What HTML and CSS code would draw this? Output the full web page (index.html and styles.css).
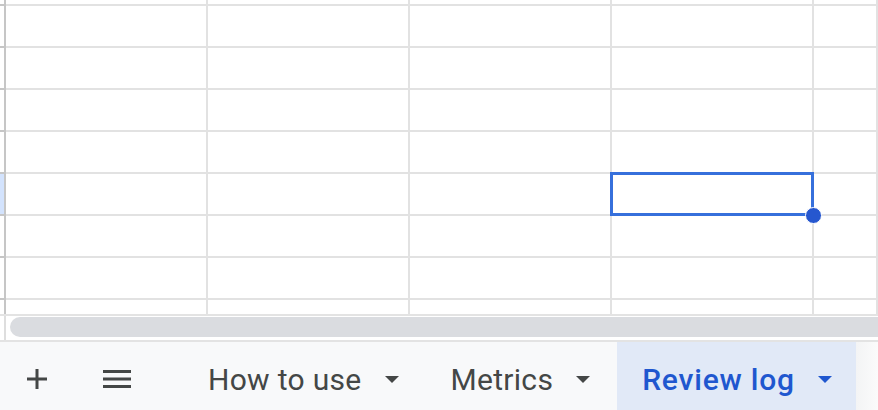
FILE: index.html
```html
<!doctype html>
<html>
    <head>
        <meta charset="utf-8">
        <link rel="stylesheet" href="styles.css">
    </head>
    <body>
        <div id="sheet">
            <div class="grid">
                <div class="rh"></div><div class="c"></div><div class="c"></div><div class="c"></div><div class="c"></div><div class="c"></div>
                <div class="rh"></div><div class="c"></div><div class="c"></div><div class="c"></div><div class="c"></div><div class="c"></div>
                <div class="rh"></div><div class="c"></div><div class="c"></div><div class="c"></div><div class="c"></div><div class="c"></div>
                <div class="rh"></div><div class="c"></div><div class="c"></div><div class="c"></div><div class="c"></div><div class="c"></div>
                <div class="rh"></div><div class="c"></div><div class="c"></div><div class="c"></div><div class="c"></div><div class="c"></div>
                <div class="rh active"></div><div class="c"></div><div class="c"></div><div class="c"></div><div class="c"></div><div class="c"></div>
                <div class="rh"></div><div class="c"></div><div class="c"></div><div class="c"></div><div class="c"></div><div class="c"></div>
                <div class="rh"></div><div class="c"></div><div class="c"></div><div class="c"></div><div class="c"></div><div class="c"></div>
                <div class="rh"></div><div class="c"></div><div class="c"></div><div class="c"></div><div class="c"></div><div class="c"></div>
            </div>
            <!-- selected cell -->
            <div class="selection"><span class="handle"></span></div>
        </div>

        <div id="hscroll">
            <div class="corner"></div>
            <div class="thumb"></div>
        </div>

        <div id="tabbar">
            <button class="tool add" title="Add sheet">
                <svg width="20" height="20" viewBox="0 0 20 20"><path d="M10 0v20M0 10h20" stroke="#444746" stroke-width="3"/></svg>
            </button>
            <button class="tool all" title="All sheets">
                <svg width="28" height="18" viewBox="0 0 28 18"><path d="M0 1.5h28M0 9h28M0 16.5h28" stroke="#444746" stroke-width="3"/></svg>
            </button>
            <div class="tabs">
                <div class="tab">How to use <span class="caret"></span></div>
                <div class="tab">Metrics <span class="caret"></span></div>
                <div class="tab current">Review log <span class="caret"></span></div>
            </div>
            <div class="fade"></div>
        </div>
    </body>
</html>
```
FILE: styles.css
```css
* {
    margin: 0;
    padding: 0;
    box-sizing: border-box;
}
html, body {
    width: 878px;
    height: 410px;
    overflow: hidden;
    background: #fff;
    font-family: Roboto, "Noto Sans", Arial, sans-serif;
}
#sheet {
    position: relative;
    height: 314px;
    overflow: hidden;
}
.grid {
    display: grid;
    grid-template-columns: 6px repeat(4, 202px) 1fr;
    grid-template-rows: 6px repeat(8, 42px);
}
.grid .c {
    border-right: 2px solid #e2e2e2;
    border-bottom: 2px solid #e2e2e2;
}
.grid .rh {
    border-right: 2px solid #c6c6c6;
    border-bottom: 2px solid #c6c6c6;
}
.grid .rh.active {
    background: #d3e3fd;
}
.selection {
    position: absolute;
    left: 610px;
    top: 172px;
    width: 204px;
    height: 44px;
    border: 3px solid #3670dc;
}
.handle {
    position: absolute;
    right: -11px;
    bottom: -11px;
    width: 17px;
    height: 17px;
    border-radius: 50%;
    background: #2657cf;
    border: 1px solid #fff;
}
#hscroll {
    display: flex;
    height: 26px;
    border-top: 2px solid #e3e3e3;
}
#hscroll .corner {
    width: 6px;
    border-right: 2px solid #dedede;
}
#hscroll .thumb {
    flex: 1;
    height: 20px;
    margin: 1px -20px 0 4px;
    border-radius: 10px;
    background: #dadce0;
}
#tabbar {
    position: relative;
    display: flex;
    height: 70px;
    border-top: 2px solid #e3e3e3;
    background: #f8f9fa;
}
.tool {
    display: flex;
    align-items: center;
    justify-content: center;
    width: 40px;
    padding-top: 6px;
    border: none;
    background: none;
}
.tool.add {
    margin-left: 17px;
}
.tool.all {
    margin-left: 40px;
}
.tabs {
    display: flex;
    gap: 2px;
    margin-left: 46px;
}
.tab {
    display: flex;
    align-items: center;
    gap: 23px;
    padding: 6px 25px 0;
    font-size: 30px;
    letter-spacing: 0.3px;
    color: #444746;
    white-space: nowrap;
}
.tab.current {
    background: #e1e9f7;
    color: #1f57cf;
    font-weight: 500;
    letter-spacing: 0.8px;
}
.caret {
    width: 0;
    height: 0;
    border-left: 7px solid transparent;
    border-right: 7px solid transparent;
    border-top: 7px solid #444746;
}
.tab.current .caret {
    border-top-color: #1f57cf;
}
.fade {
    position: absolute;
    right: 0;
    top: 0;
    bottom: 0;
    width: 22px;
    background: linear-gradient(to right, #f3f4f5, #fbfbfb);
}
```
